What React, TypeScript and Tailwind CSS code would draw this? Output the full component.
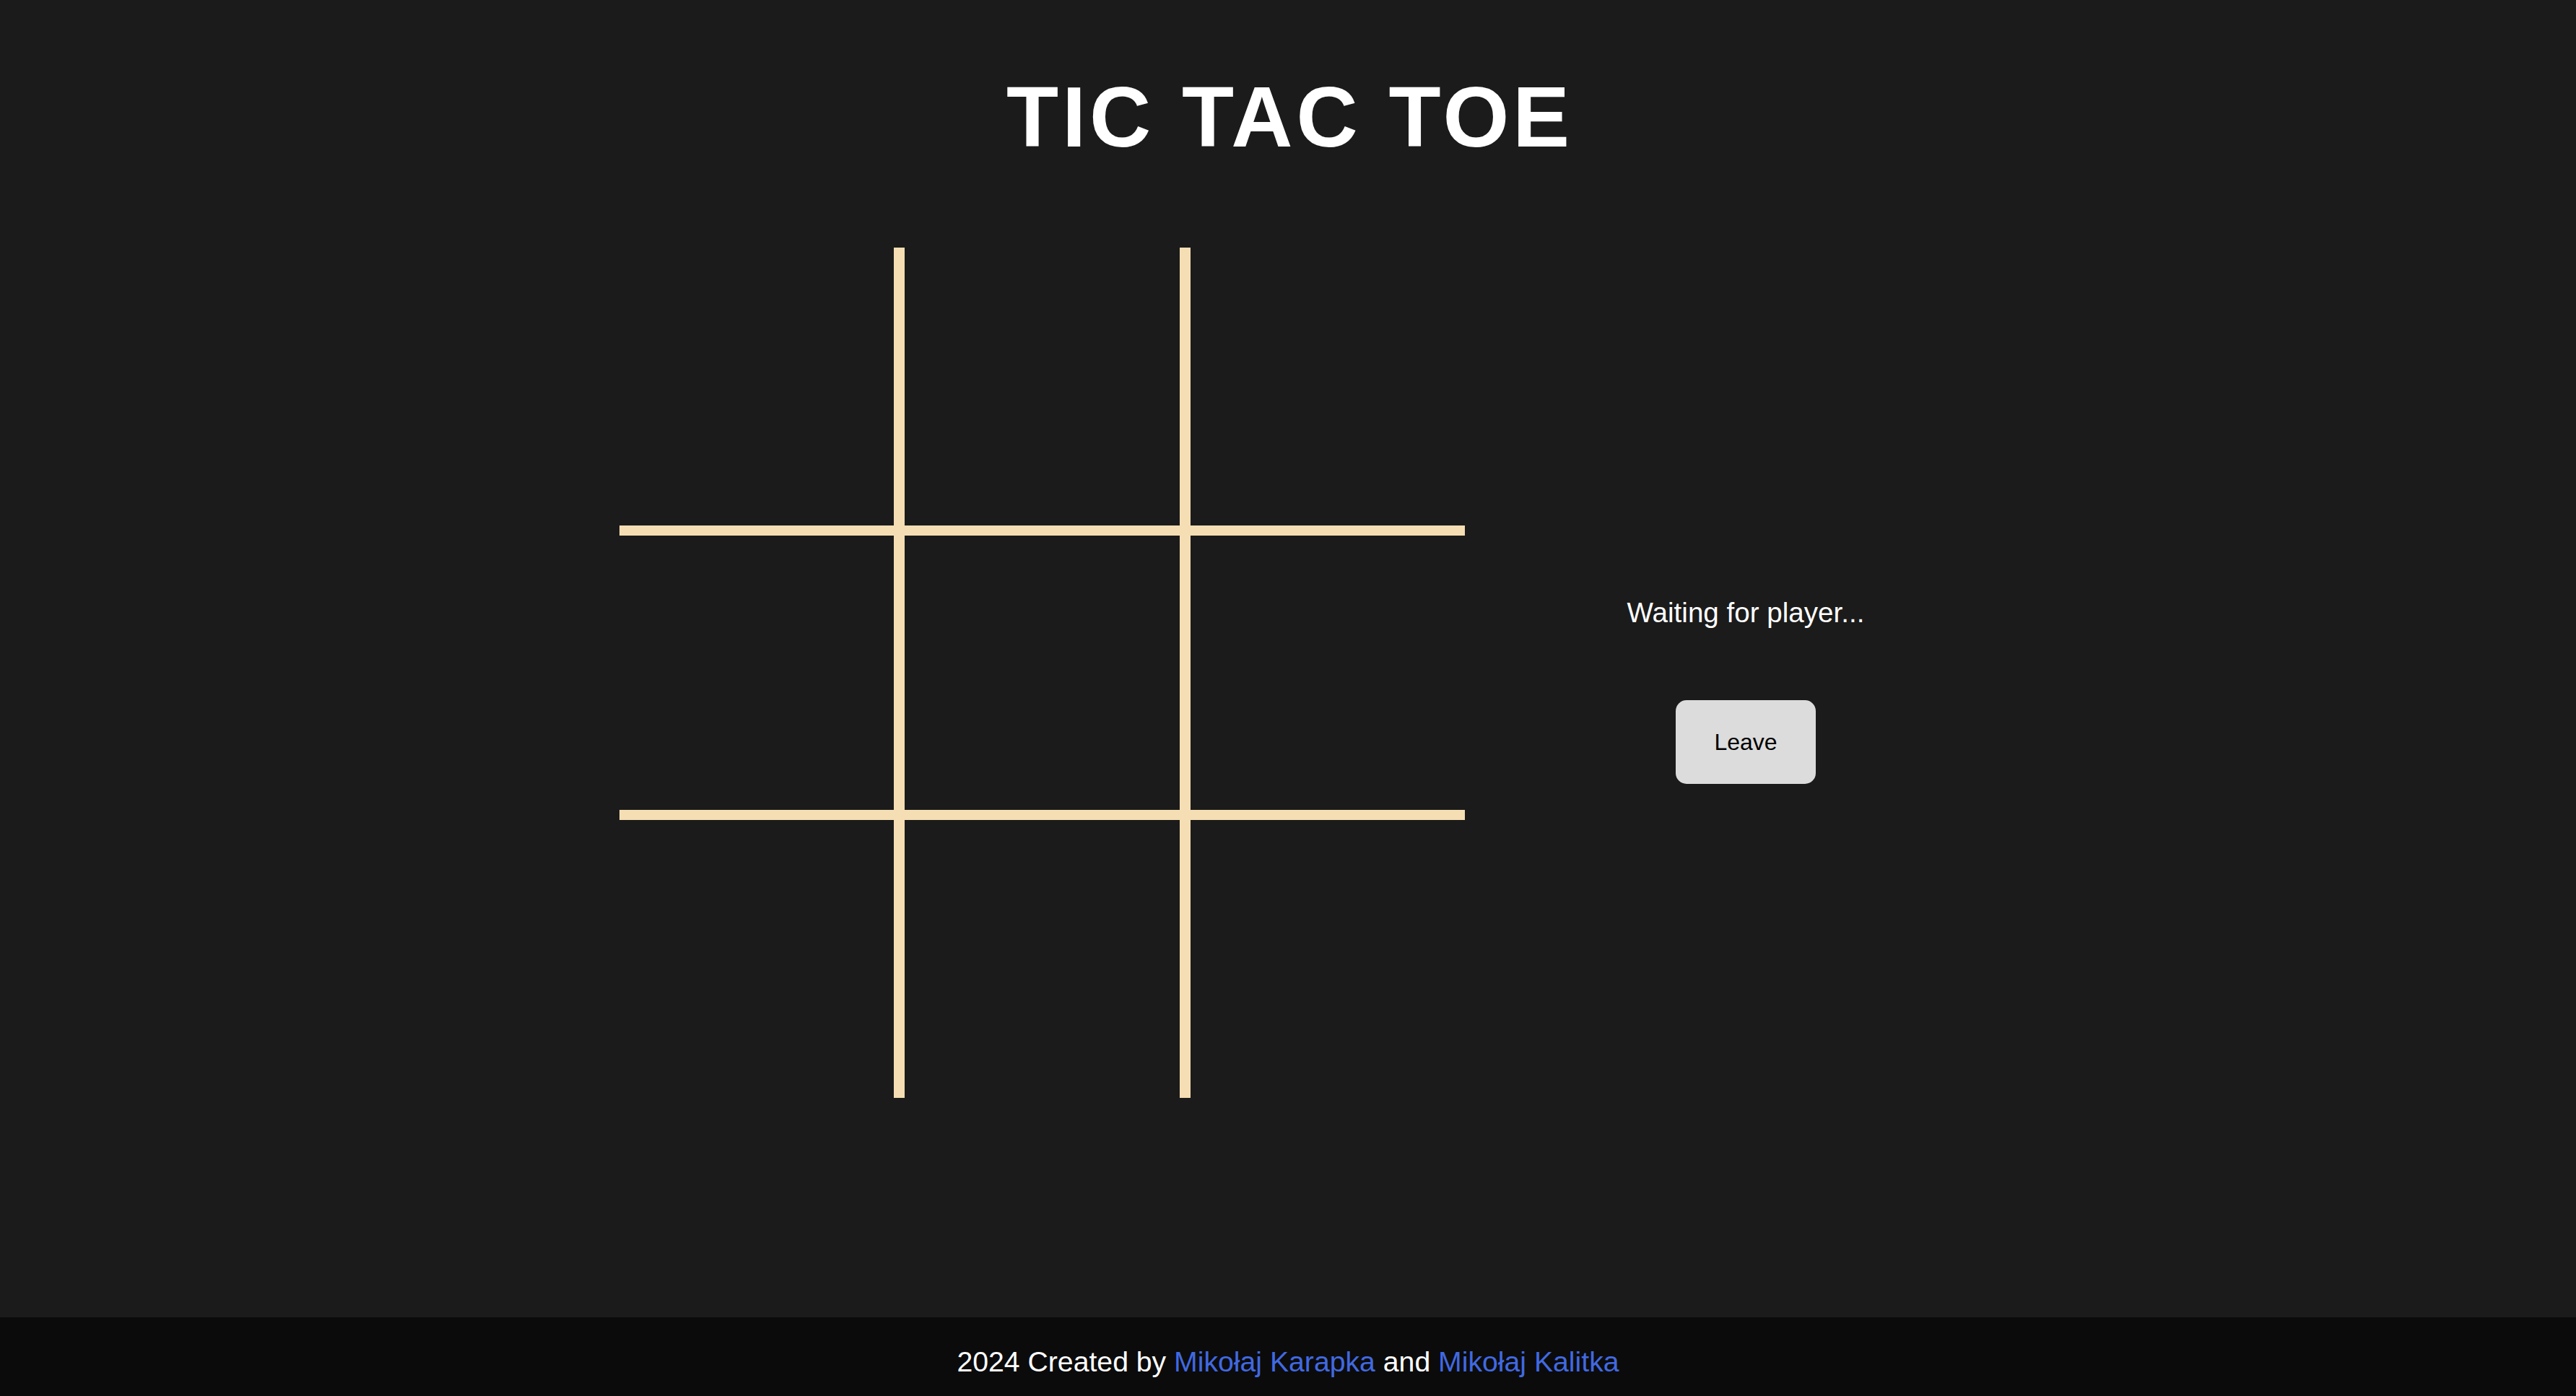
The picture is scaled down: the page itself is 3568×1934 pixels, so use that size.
import React from 'react';

const cols = ['w-[380px]', 'w-[15px]', 'w-[381px]', 'w-[15px]', 'w-[380px]'];
const rows = ['h-[385px]', 'h-[14px]', 'h-[380px]', 'h-[14px]', 'h-[385px]'];

function Board() {
  return (
    <div className="grid grid-cols-[380px_15px_381px_15px_380px] grid-rows-[385px_14px_380px_14px_385px] shrink-0">
      {rows.map((r, ri) =>
        cols.map((c, ci) => {
          const isLine = ri % 2 === 1 || ci % 2 === 1;
          return (
            <div
              key={`${ri}-${ci}`}
              className={isLine ? 'bg-[#f5deb3]' : 'bg-transparent cursor-pointer'}
            />
          );
        })
      )}
    </div>
  );
}

export default function App() {
  return (
    <div className="min-h-screen flex flex-col bg-[#1b1b1b] text-white font-['Liberation_Sans',Arial,sans-serif]">
      <main className="flex-1 flex flex-col items-center">
        <h1 className="mt-[104px] text-[118px] leading-[117px] font-bold tracking-[5px] pl-[5px]">
          TIC TAC TOE
        </h1>

        <div className="mt-[122px] flex items-start gap-[97px]">
          <Board />
          <div className="w-[584px] flex flex-col items-center pt-[487px]">
            <p className="text-[38.6px] leading-[38px]">Waiting for player...</p>
            <button className="mt-[102px] w-[194px] h-[116px] rounded-[15px] bg-[#dcdcdc] text-black text-[32px] leading-none">
              Leave
            </button>
          </div>
        </div>
      </main>

      <footer className="h-[109px] bg-[#0b0b0b] flex justify-center pt-[42px] text-[39.2px] leading-[39px]">
        <p>
          2024 Created by <a href="#" className="text-[#4169e1]">Mikołaj Karapka</a> and{' '}
          <a href="#" className="text-[#4169e1]">Mikołaj Kalitka</a>
        </p>
      </footer>
    </div>
  );
}
